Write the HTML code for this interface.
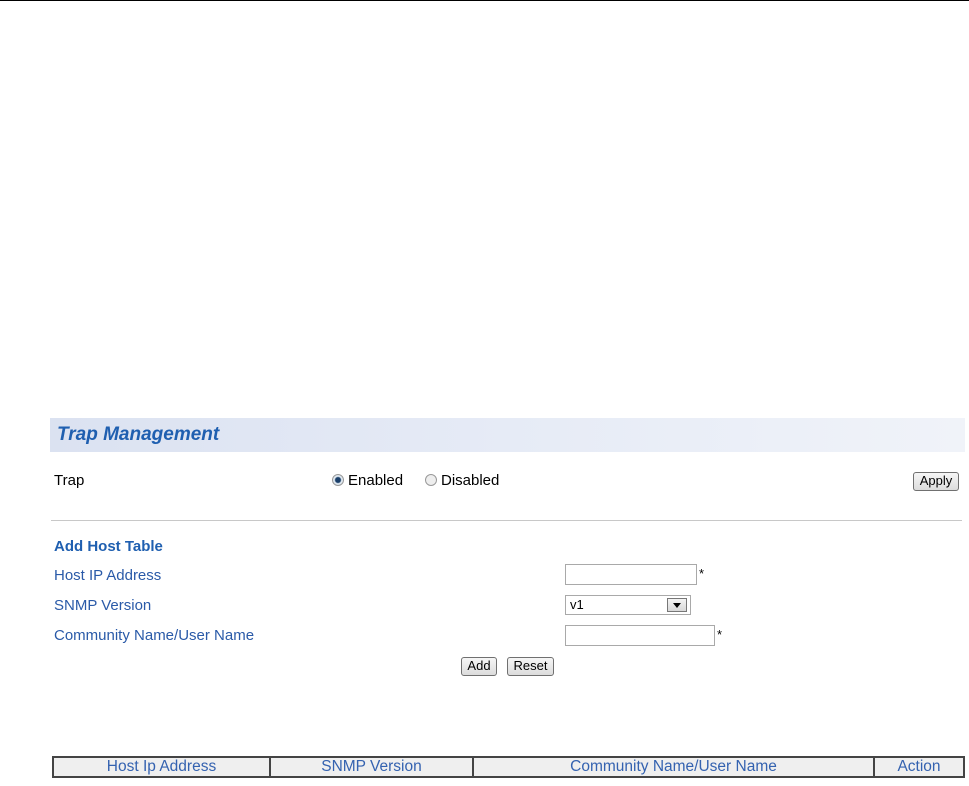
<!DOCTYPE html>
<html><head><meta charset="utf-8"><style>
body{margin:0;width:969px;height:786px;background:#fff;position:relative;overflow:hidden;font-family:"Liberation Sans",Arial,sans-serif;font-size:14px}
.a{position:absolute;white-space:nowrap}
.blue{color:#2a5aa8}
.btn{position:absolute;border:1px solid #707070;border-radius:3px;background:linear-gradient(#f6f6f6,#dcdcdc);font-size:13px;text-align:center;color:#000;box-sizing:border-box;line-height:16px}
.inp{position:absolute;border:1px solid #a9a9a9;background:#fff;box-sizing:border-box}
table{position:absolute;left:52px;top:756px;width:913px;height:22px;border-collapse:collapse}
td{border:2px solid #444;background:#efefef;color:#3462b0;text-align:center;font-size:15.5px;padding:0;height:18px}
.radio{display:inline-block;width:12px;height:12px;border-radius:50%;border:1px solid #999;background:#eee;vertical-align:-1px;margin-right:4px;box-sizing:border-box;position:relative}
</style></head><body>
<div class="a" style="left:0;top:0;width:969px;height:1px;background:#000"></div>
<div class="a" style="left:50px;top:418px;width:915px;height:34px;background:linear-gradient(90deg,#dbe2f1,#e6ebf6 50%,#f0f3f9)"></div>
<div class="a" style="left:57px;top:424px;font-size:19px;font-weight:bold;font-style:italic;color:#1f5fb0">Trap Management</div>
<div class="a" style="left:54px;top:472px;font-size:15px;color:#000">Trap</div>
<div class="a" style="left:332px;top:472px;font-size:15px;color:#000"><span class="radio" style="background:radial-gradient(circle,#1a3f6a 0 2.5px,#dfe8f0 3.5px)"></span>Enabled</div>
<div class="a" style="left:425px;top:472px;font-size:15px;color:#000"><span class="radio"></span>Disabled</div>
<div class="btn" style="left:913px;top:472px;width:46px;height:19px">Apply</div>
<div class="a" style="left:51px;top:520px;width:911px;height:1px;background:#c8c8c8"></div>
<div class="a blue" style="left:54px;top:538px;font-size:15px;font-weight:bold;color:#1f5fb0">Add Host Table</div>
<div class="a blue" style="left:54px;top:567px;font-size:15px">Host IP Address</div>
<div class="a blue" style="left:54px;top:597px;font-size:15px">SNMP Version</div>
<div class="a blue" style="left:54px;top:627px;font-size:15px">Community Name/User Name</div>
<div class="inp" style="left:565px;top:564px;width:132px;height:21px"></div>
<div class="a" style="left:699px;top:566px;font-size:13px">*</div>
<div class="inp" style="left:565px;top:595px;width:126px;height:20px;font-size:13px;padding-left:4px;line-height:18px">v1
<div style="position:absolute;right:3px;top:2px;width:20px;height:14px;border:1px solid #777;background:linear-gradient(#f4f4f4,#d8d8d8);box-sizing:border-box"><div style="position:absolute;left:5px;top:4px;width:0;height:0;border-left:4px solid transparent;border-right:4px solid transparent;border-top:5px solid #000"></div></div></div>
<div class="inp" style="left:565px;top:625px;width:150px;height:21px"></div>
<div class="a" style="left:717px;top:627px;font-size:13px">*</div>
<div class="btn" style="left:461px;top:657px;width:36px;height:19px">Add</div>
<div class="btn" style="left:507px;top:657px;width:47px;height:19px">Reset</div>
<table><tr>
<td style="width:215px">Host Ip Address</td>
<td style="width:201px">SNMP Version</td>
<td style="width:399px">Community Name/User Name</td>
<td>Action</td>
</tr></table>
</body></html>
